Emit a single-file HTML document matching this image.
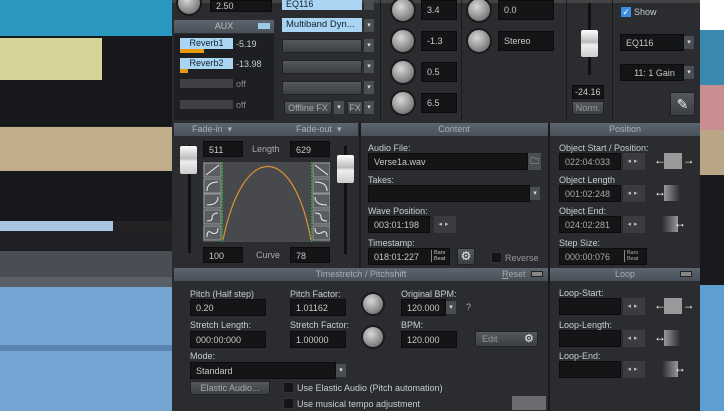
<!DOCTYPE html><html><head><style>
*{margin:0;padding:0;box-sizing:border-box}
body{width:724px;height:411px;overflow:hidden;background:#222;font-family:"Liberation Sans",sans-serif;font-size:9px;color:#d0d0d0;position:relative}
.a{position:absolute}
.f{position:absolute;background:#141517;color:#c8c8c8;padding-left:5px;line-height:16px;height:17px;border:1px solid #0c0c0d}
.l{position:absolute;color:#c8ccd0;font-size:9px}
.h{position:absolute;background:linear-gradient(#5d656e,#485059);color:#a8aeb4;text-align:center;line-height:12px;font-size:9px;height:13px}
.dd{position:absolute;width:10px;height:13px;background:#4a4d52;color:#ddd;font-size:7px;text-align:center;line-height:13px}
.k{position:absolute;border-radius:50%;background:radial-gradient(circle at 40% 35%,#d8d8d8,#8a8a8a 60%,#555);border:2px solid #1a1a1a}
.b{position:absolute;background:linear-gradient(#55585d,#3b3e42);border:1px solid #222;color:#aaa;text-align:center}
.ar{position:absolute;width:22px;height:17px;background:#3a3c40;color:#bbb;font-size:7px;line-height:17px;text-align:center;letter-spacing:3px}
.cb{position:absolute;width:11px;height:11px;background:#151515;border:1px solid #333}
</style></head><body>
<!-- left background -->
<div class="a" style="left:0;top:0;width:172px;height:36px;background:#2b98c2"></div>
<div class="a" style="left:0;top:36px;width:172px;height:90px;background:#17181c"></div>
<div class="a" style="left:0;top:38px;width:102px;height:42px;background:#d6d49a"></div>
<div class="a" style="left:0;top:127px;width:172px;height:44px;background:#c2ad8a"></div>
<div class="a" style="left:0;top:171px;width:172px;height:50px;background:#17181c"></div>
<div class="a" style="left:0;top:221px;width:113px;height:10px;background:#a8c4e0"></div>
<div class="a" style="left:0;top:231px;width:172px;height:20px;background:#1e2024"></div>
<div class="a" style="left:0;top:251px;width:172px;height:26px;background:#4a4e54"></div>
<div class="a" style="left:0;top:277px;width:172px;height:10px;background:#5a6068"></div>
<div class="a" style="left:0;top:287px;width:172px;height:124px;background:#76a4d2"></div>
<div class="a" style="left:0;top:345px;width:172px;height:6px;background:#5a84b0"></div>
<!-- right background -->
<div class="a" style="left:700px;top:0;width:24px;height:30px;background:#fff"></div>
<div class="a" style="left:700px;top:30px;width:24px;height:55px;background:#3a8ab0"></div>
<div class="a" style="left:700px;top:85px;width:24px;height:45px;background:#c88e90"></div>
<div class="a" style="left:700px;top:130px;width:24px;height:45px;background:#b8a684"></div>
<div class="a" style="left:700px;top:175px;width:24px;height:110px;background:#1a1a1e"></div>
<div class="a" style="left:700px;top:285px;width:24px;height:126px;background:#5e9ed0"></div>
<!-- panel -->
<div class="a" style="left:172px;top:0;width:528px;height:411px;background:#2a2c30"></div>
<div class="a" style="left:172px;top:0;width:528px;height:3px;background:#444"></div>
<!-- AUX column -->
<div class="k" style="left:176px;top:-10px;width:26px;height:26px"></div>
<div class="f" style="left:210px;top:0;width:62px;height:12px;line-height:10px">2.50</div>
<div class="h" style="left:174px;top:20px;width:100px;color:#bbb">AUX<span class="a" style="left:84px;top:3px;width:12px;height:6px;background:#9ccbe8"></span></div>
<div class="a" style="left:174px;top:34px;width:100px;height:86px;background:#1e1f22"></div>
<div class="a" style="left:180px;top:38px;width:53px;height:11px;background:#a9d4f2;color:#123;text-align:center;line-height:11px">Reverb1</div>
<div class="l" style="left:236px;top:39px">-5.19</div>
<div class="a" style="left:180px;top:49px;width:24px;height:4px;background:#e89a12"></div>
<div class="a" style="left:180px;top:58px;width:53px;height:11px;background:#a9d4f2;color:#123;text-align:center;line-height:11px">Reverb2</div>
<div class="l" style="left:236px;top:59px">-13.98</div>
<div class="a" style="left:180px;top:69px;width:8px;height:4px;background:#e89a12"></div>
<div class="a" style="left:180px;top:79px;width:53px;height:9px;background:#3e4044"></div><div class="l" style="left:236px;top:79px;color:#888">off</div>
<div class="a" style="left:180px;top:100px;width:53px;height:9px;background:#3e4044"></div><div class="l" style="left:236px;top:100px;color:#888">off</div>
<!-- FX column -->
<div class="a" style="left:282px;top:0;width:80px;height:10px;background:#a9d4f2;color:#123;padding-left:4px;line-height:8px">EQ116</div><div class="dd" style="left:364px;top:0;height:10px"></div>
<div class="a" style="left:282px;top:18px;width:80px;height:14px;background:#a9d4f2;color:#123;padding-left:4px;line-height:14px;font-size:9.5px">Multiband Dyn...</div><div class="dd" style="left:364px;top:19px">▾</div>
<div class="b" style="left:282px;top:39px;width:80px;height:14px"></div><div class="dd" style="left:364px;top:39px">▾</div>
<div class="b" style="left:282px;top:60px;width:80px;height:14px"></div><div class="dd" style="left:364px;top:60px">▾</div>
<div class="b" style="left:282px;top:81px;width:80px;height:14px"></div><div class="dd" style="left:364px;top:81px">▾</div>
<div class="b" style="left:284px;top:101px;width:48px;height:14px;line-height:12px">Offline FX</div><div class="dd" style="left:334px;top:101px">▾</div>
<div class="b" style="left:347px;top:101px;width:16px;height:14px;line-height:12px">FX</div><div class="dd" style="left:364px;top:101px">▾</div>
<div class="a" style="left:380px;top:0;width:1px;height:120px;background:#1a1a1a"></div>
<!-- knobs col -->
<div class="k" style="left:390px;top:-3px;width:26px;height:26px"></div><div class="f" style="left:421px;top:0;width:36px;height:20px;line-height:18px">3.4</div>
<div class="k" style="left:390px;top:28px;width:26px;height:26px"></div><div class="f" style="left:421px;top:31px;width:36px;height:20px;line-height:18px">-1.3</div>
<div class="k" style="left:390px;top:59px;width:26px;height:26px"></div><div class="f" style="left:421px;top:62px;width:36px;height:20px;line-height:18px">0.5</div>
<div class="k" style="left:390px;top:90px;width:26px;height:26px"></div><div class="f" style="left:421px;top:93px;width:36px;height:20px;line-height:18px">6.5</div>
<div class="a" style="left:461px;top:0;width:1px;height:120px;background:#1a1a1a"></div>
<div class="k" style="left:466px;top:-3px;width:26px;height:26px"></div><div class="f" style="left:498px;top:0;width:56px;height:20px;line-height:18px">0.0</div>
<div class="k" style="left:466px;top:28px;width:26px;height:26px"></div><div class="f" style="left:498px;top:31px;width:56px;height:20px;line-height:18px">Stereo</div>
<!-- fader col -->
<div class="a" style="left:566px;top:0;width:1px;height:120px;background:#1a1a1a"></div>
<div class="a" style="left:588px;top:3px;width:3px;height:72px;background:#111"></div>
<div class="a" style="left:581px;top:30px;width:17px;height:27px;background:linear-gradient(#fff,#bbb 45%,#eee 55%,#ccc);border-radius:2px"></div>
<div class="f" style="left:572px;top:85px;width:32px;height:14px;line-height:12px;padding-left:2px">-24.16</div>
<div class="b" style="left:572px;top:101px;width:32px;height:14px;line-height:12px;color:#999">Norm.</div>
<div class="a" style="left:612px;top:0;width:1px;height:120px;background:#1a1a1a"></div>
<div class="a" style="left:621px;top:7px;width:10px;height:10px;background:#3b8ee0;color:#fff;font-size:9px;line-height:10px;text-align:center">✓</div>
<div class="l" style="left:634px;top:7px">Show</div>
<div class="f" style="left:620px;top:34px;width:64px;height:17px">EQ116</div><div class="dd" style="left:684px;top:36px">▾</div>
<div class="f" style="left:620px;top:64px;width:64px;height:17px;text-align:center">11: 1 Gain</div><div class="dd" style="left:684px;top:66px">▾</div>
<div class="b" style="left:670px;top:92px;width:25px;height:24px;color:#eee;font-size:14px;line-height:22px">✎</div>
<!-- headers -->
<div class="h" style="left:174px;top:123px;width:184px;text-align:left;padding-left:18px">Fade-in &nbsp;▾<span class="a" style="left:122px">Fade-out &nbsp;▾</span></div>
<div class="h" style="left:360px;top:123px;width:188px">Content</div>
<div class="h" style="left:550px;top:123px;width:150px">Position</div>
<!-- fade -->
<div class="a" style="left:188px;top:145px;width:3px;height:108px;background:#111"></div>
<div class="a" style="left:180px;top:146px;width:17px;height:28px;background:linear-gradient(#fff,#bbb 45%,#eee 55%,#ccc);border-radius:2px"></div>
<div class="a" style="left:344px;top:146px;width:3px;height:108px;background:#111"></div>
<div class="a" style="left:337px;top:155px;width:17px;height:28px;background:linear-gradient(#fff,#bbb 45%,#eee 55%,#ccc);border-radius:2px"></div>
<div class="f" style="left:203px;top:141px;width:40px;height:16px">511</div>
<div class="l" style="left:252px;top:144px;color:#aaa">Length</div>
<div class="f" style="left:290px;top:141px;width:40px;height:16px">629</div>
<div class="a" style="left:203px;top:162px;width:127px;height:80px;background:#47494d"></div>
<svg class="a" style="left:203px;top:162px" width="127" height="80"><line x1="19.5" y1="0" x2="19.5" y2="80" stroke="#2a2" stroke-dasharray="2,1"/><line x1="108.5" y1="0" x2="108.5" y2="80" stroke="#2a2" stroke-dasharray="2,1"/><path d="M20 78 C40 -20 90 -20 108 78" fill="none" stroke="#d99030" stroke-width="1.2"/>
<g fill="#5a5d62" stroke="#999"><rect x="1" y="1" width="17" height="14"/><rect x="1" y="17" width="17" height="14"/><rect x="1" y="32" width="17" height="14"/><rect x="1" y="48" width="17" height="14"/><rect x="1" y="64" width="17" height="14"/><rect x="110" y="1" width="17" height="14"/><rect x="110" y="17" width="17" height="14"/><rect x="110" y="32" width="17" height="14"/><rect x="110" y="48" width="17" height="14"/><rect x="110" y="64" width="17" height="14"/></g>
<g stroke="#eee" fill="none"><path d="M3 13L16 3M4 29Q4 20 15 20M4 43Q15 43 15 35M4 59Q10 59 9 55Q10 51 15 51M4 75Q4 67 9 71Q15 73 15 66M112 3L125 13M112 20Q124 20 124 29M112 35Q112 43 124 43M112 51Q118 51 118 55Q118 59 124 59M112 66Q112 73 118 71Q124 67 124 75"/></g></svg>
<div class="f" style="left:203px;top:247px;width:40px;height:16px">100</div>
<div class="l" style="left:256px;top:250px;color:#aaa">Curve</div>
<div class="f" style="left:290px;top:247px;width:40px;height:16px">78</div>
<div class="a" style="left:359px;top:123px;width:2px;height:144px;background:#1a1a1a"></div>
<div class="a" style="left:548px;top:123px;width:2px;height:288px;background:#1a1a1a"></div>
<!-- content -->
<div class="l" style="left:368px;top:143px">Audio File:</div>
<div class="f" style="left:368px;top:153px;width:160px">Verse1a.wav</div><div class="dd" style="left:528px;top:153px;width:13px;height:17px;line-height:17px;font-size:9px">🗀</div>
<div class="l" style="left:368px;top:175px">Takes:</div>
<div class="f" style="left:368px;top:185px;width:162px"></div><div class="dd" style="left:530px;top:187px">▾</div>
<div class="l" style="left:368px;top:206px">Wave Position:</div>
<div class="f" style="left:368px;top:216px;width:62px">003:01:198</div><div class="ar" style="left:434px;top:216px">◂▸</div>
<div class="l" style="left:368px;top:238px">Timestamp:</div>
<div class="f" style="left:368px;top:248px;width:82px">018:01:227<span class="a" style="left:62px;top:1px;font-size:5.5px;line-height:6px;border-left:1px solid #888;padding-left:2px">Bars<br>Beat</span></div>
<div class="b" style="left:457px;top:248px;width:18px;height:17px;color:#eee;font-size:12px;line-height:15px">⚙</div>
<div class="cb" style="left:491px;top:252px"></div><div class="l" style="left:505px;top:253px;color:#999">Reverse</div>
<!-- position -->
<div class="l" style="left:559px;top:143px">Object Start / Position:</div>
<div class="f" style="left:559px;top:153px;width:62px;color:#aaa">022:04:033</div><div class="ar" style="left:623px;top:153px">◂▸</div>
<div class="l" style="left:559px;top:175px">Object Length</div>
<div class="f" style="left:559px;top:185px;width:62px;color:#aaa">001:02:248</div><div class="ar" style="left:623px;top:185px">◂▸</div>
<div class="l" style="left:559px;top:206px">Object End:</div>
<div class="f" style="left:559px;top:216px;width:62px;color:#aaa">024:02:281</div><div class="ar" style="left:623px;top:216px">◂▸</div>
<div class="l" style="left:559px;top:238px">Step Size:</div>
<div class="f" style="left:559px;top:248px;width:88px;color:#aaa">000:00:076<span class="a" style="left:64px;top:1px;font-size:5.5px;line-height:6px;border-left:1px solid #888;padding-left:2px">Bars<br>Beat</span></div>
<div class="a" style="left:664px;top:153px;width:18px;height:16px;background:#999"></div><div class="l" style="left:654px;top:153px;color:#fff;font-size:12px">←&nbsp;&nbsp;&nbsp;&nbsp;&nbsp;→</div>
<div class="a" style="left:664px;top:185px;width:16px;height:16px;background:linear-gradient(90deg,#999,#2a2c30)"></div><div class="l" style="left:654px;top:185px;color:#fff;font-size:12px">↔</div>
<div class="a" style="left:662px;top:216px;width:16px;height:16px;background:linear-gradient(90deg,#2a2c30,#999)"></div><div class="l" style="left:674px;top:216px;color:#fff;font-size:12px">↔</div>
<!-- timestretch -->
<div class="h" style="left:174px;top:268px;width:374px">Timestretch / Pitchshift<span class="a" style="left:328px;color:#aaa"><u>R</u>eset</span><span class="a" style="left:357px;top:3px;width:12px;height:6px;background:#888;border:1px solid #222"></span></div>
<div class="h" style="left:550px;top:268px;width:150px">Loop<span class="a" style="left:130px;top:3px;width:12px;height:6px;background:#888;border:1px solid #222"></span></div>
<div class="l" style="left:190px;top:289px">Pitch (Half step)</div>
<div class="f" style="left:190px;top:299px;width:76px">0.20</div>
<div class="l" style="left:290px;top:289px">Pitch Factor:</div>
<div class="f" style="left:290px;top:299px;width:56px">1.01162</div>
<div class="k" style="left:361px;top:292px;width:24px;height:24px"></div>
<div class="l" style="left:401px;top:289px">Original BPM:</div>
<div class="f" style="left:401px;top:299px;width:45px">120.000</div><div class="dd" style="left:446px;top:301px">▾</div>
<div class="l" style="left:466px;top:302px;color:#aaa">?</div>
<div class="l" style="left:190px;top:320px">Stretch Length:</div>
<div class="f" style="left:190px;top:331px;width:76px">000:00:000</div>
<div class="l" style="left:290px;top:320px">Stretch Factor:</div>
<div class="f" style="left:290px;top:331px;width:56px">1.00000</div>
<div class="k" style="left:361px;top:325px;width:24px;height:24px"></div>
<div class="l" style="left:401px;top:320px">BPM:</div>
<div class="f" style="left:401px;top:331px;width:56px">120.000</div>
<div class="b" style="left:475px;top:331px;width:63px;height:16px;line-height:14px;text-align:left;padding-left:6px;color:#999">Edit<span class="a" style="left:48px;top:0;color:#eee;font-size:11px">⚙</span></div>
<div class="l" style="left:190px;top:351px">Mode:</div>
<div class="f" style="left:190px;top:362px;width:146px">Standard</div><div class="dd" style="left:336px;top:364px">▾</div>
<div class="b" style="left:190px;top:381px;width:80px;height:14px;line-height:12px">Elastic Audio...</div>
<div class="cb" style="left:283px;top:382px"></div><div class="l" style="left:297px;top:383px">Use Elastic Audio (Pitch automation)</div>
<div class="cb" style="left:283px;top:398px"></div><div class="l" style="left:297px;top:399px">Use musical tempo adjustment</div>
<div class="a" style="left:512px;top:396px;width:34px;height:14px;background:#6a6c70"></div>
<!-- loop -->
<div class="l" style="left:559px;top:288px">Loop-Start:</div>
<div class="f" style="left:559px;top:298px;width:62px"></div><div class="ar" style="left:623px;top:298px">◂▸</div>
<div class="l" style="left:559px;top:320px">Loop-Length:</div>
<div class="f" style="left:559px;top:330px;width:62px"></div><div class="ar" style="left:623px;top:330px">◂▸</div>
<div class="l" style="left:559px;top:351px">Loop-End:</div>
<div class="f" style="left:559px;top:361px;width:62px"></div><div class="ar" style="left:623px;top:361px">◂▸</div>
<div class="a" style="left:664px;top:298px;width:18px;height:16px;background:#999"></div><div class="l" style="left:654px;top:298px;color:#fff;font-size:12px">←&nbsp;&nbsp;&nbsp;&nbsp;&nbsp;→</div>
<div class="a" style="left:664px;top:330px;width:16px;height:16px;background:linear-gradient(90deg,#999,#2a2c30)"></div><div class="l" style="left:654px;top:330px;color:#fff;font-size:12px">↔</div>
<div class="a" style="left:662px;top:361px;width:16px;height:16px;background:linear-gradient(90deg,#2a2c30,#999)"></div><div class="l" style="left:674px;top:361px;color:#fff;font-size:12px">↔</div>
</body></html>
